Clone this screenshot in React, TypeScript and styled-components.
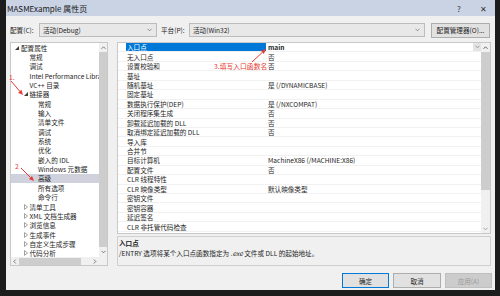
import React from "react";
import styled, { createGlobalStyle } from "styled-components";

const FONT = `"Noto Sans CJK SC", "Noto Sans", sans-serif`;

const Global = createGlobalStyle`
  html, body { margin: 0; padding: 0; background: #1c1c1c; }
  body { font-family: ${FONT}; width: 500px; height: 296px; overflow: hidden; color: #1e1e1e; }
  * { box-sizing: border-box; }
`;

const Screen = styled.div`
  width: 500px;
  height: 296px;
  background: #1c1c1c;
  padding-left: 6px;
`;

const Window = styled.div`
  position: relative;
  width: 489px;
  height: 290px;
  background: #f0f0f0;
  display: flex;
  flex-direction: column;
`;

const TitleBar = styled.div`
  height: 16px;
  background: #c9d3e4;
  display: flex;
  align-items: center;
  padding-left: 1px;
  font-size: 8px;
  color: #1a1a1a;
`;

const TitleButtons = styled.div`
  margin-left: auto;
  display: flex;
  height: 100%;
`;

const TitleButton = styled.div`
  width: 24px;
  height: 100%;
  display: flex;
  align-items: center;
  justify-content: center;
  font-size: 8px;
  color: #333;
`;

const ConfigRow = styled.div`
  margin-top: 7px;
  height: 14px;
  padding: 0 5px 0 4px;
  display: flex;
  align-items: center;
  font-size: 6.6px;
`;

const FieldLabel = styled.div<{ $w: number; $ml?: number }>`
  width: ${(p) => p.$w}px;
  margin-left: ${(p) => p.$ml ?? 0}px;
  white-space: nowrap;
`;

const Select = styled.div<{ $w: number }>`
  width: ${(p) => p.$w}px;
  height: 14px;
  background: #e8e8e8;
  border: 1px solid #bcbcbc;
  display: flex;
  align-items: center;
  padding: 0 4px 0 3px;
  justify-content: space-between;
`;

const PushButton = styled.div<{ $w: number; $ml?: number; $primary?: boolean; $disabled?: boolean }>`
  width: ${(p) => p.$w}px;
  margin-left: ${(p) => p.$ml ?? 0}px;
  height: 15px;
  background: ${(p) => (p.$disabled ? "#cccccc" : "#e1e1e1")};
  border: 1px solid ${(p) => (p.$primary ? "#0078d7" : p.$disabled ? "#bfbfbf" : "#adadad")};
  color: ${(p) => (p.$disabled ? "#9a9a9a" : "#1e1e1e")};
  display: flex;
  align-items: center;
  justify-content: center;
  font-size: 6.6px;
  white-space: nowrap;
`;

const Main = styled.div`
  margin-top: 5px;
  height: 224px;
  padding: 0 4px;
  display: flex;
  gap: 9px;
`;

const TreePanel = styled.div`
  width: 98px;
  height: 100%;
  background: #ffffff;
  border: 1px solid #c8c8c8;
  display: grid;
  grid-template-columns: 1fr 8px;
  grid-template-rows: 1fr 8px;
  overflow: hidden;
`;

const TreeRows = styled.div`
  overflow: hidden;
`;

const TreeRow = styled.div<{ $level: number; $selected?: boolean }>`
  height: 9.35px;
  display: flex;
  align-items: center;
  padding-left: ${(p) => 4 + p.$level * 8.5}px;
  background: ${(p) => (p.$selected ? "#cfd2dc" : "transparent")};
  font-size: 6.6px;
  white-space: nowrap;
  overflow: hidden;
`;

const Expander = styled.span`
  width: 6px;
  flex: none;
  display: flex;
  align-items: center;
`;

const VScroll = styled.div`
  background: #f0f0f0;
  display: flex;
  flex-direction: column;
  align-items: stretch;
`;

const ScrollArrow = styled.div<{ $h: number }>`
  height: ${(p) => p.$h}px;
  flex: none;
  display: flex;
  align-items: center;
  justify-content: center;
`;

const Thumb = styled.div<{ $fill?: boolean; $h?: number; $w?: number }>`
  background: #cdcdcd;
  ${(p) => (p.$fill ? "flex: 1;" : "flex: none;")}
  ${(p) => (p.$h !== undefined ? `height: ${p.$h}px;` : "")}
  ${(p) => (p.$w !== undefined ? `width: ${p.$w}px;` : "")}
`;

const Track = styled.div`
  flex: 1;
`;

const HScroll = styled.div`
  background: #f0f0f0;
  display: flex;
  align-items: center;
`;

const HArrow = styled.div`
  width: 8px;
  height: 100%;
  flex: none;
  display: flex;
  align-items: center;
  justify-content: center;
`;

const Corner = styled.div`
  background: #f0f0f0;
`;

const RightCol = styled.div`
  flex: 1;
  display: flex;
  flex-direction: column;
  gap: 2px;
`;

const Grid = styled.div`
  height: 192px;
  flex: none;
  background: #ffffff;
  border: 1px solid #c8c8c8;
  display: grid;
  grid-template-columns: 1fr 9px;
  overflow: hidden;
`;

const GridRows = styled.div`
  overflow: hidden;
`;

const PropRow = styled.div`
  height: 9.45px;
  display: grid;
  grid-template-columns: 8px 140px 1fr;
  border-bottom: 1px solid #f1f1f1;
  font-size: 6.6px;
  white-space: nowrap;
`;

const PropLabel = styled.div<{ $selected?: boolean }>`
  background: ${(p) => (p.$selected ? "#0078d7" : "transparent")};
  color: ${(p) => (p.$selected ? "#ffffff" : "#1e1e1e")};
  padding-left: 1px;
  display: flex;
  align-items: center;
  overflow: hidden;
`;

const PropValue = styled.div<{ $bold?: boolean }>`
  padding-left: 2px;
  display: flex;
  align-items: center;
  font-weight: ${(p) => (p.$bold ? 700 : 400)};
  overflow: hidden;
`;

const DropButton = styled.div`
  margin-left: auto;
  width: 8px;
  height: 8px;
  background: #e3e3e3;
  display: flex;
  align-items: center;
  justify-content: center;
`;

const Desc = styled.div`
  flex: 1;
  border: 1px solid #cfcfcf;
  background: #f0f0f0;
  padding: 2px 1px 0 1px;
  font-size: 6.6px;
  line-height: 9.5px;
  white-space: nowrap;
`;

const DescTitle = styled.div`
  font-weight: 700;
`;

const ButtonRow = styled.div`
  margin-top: 7px;
  padding-right: 3px;
  display: flex;
  justify-content: flex-end;
  gap: 4px;
`;

const AnnoText = styled.div<{ $x: number; $y: number }>`
  position: absolute;
  left: ${(p) => p.$x}px;
  top: ${(p) => p.$y}px;
  color: #e63a32;
  font-size: 6.8px;
  line-height: 8px;
  white-space: nowrap;
`;

const AnnoLayer = styled.svg`
  position: absolute;
  left: 0;
  top: 0;
  width: 489px;
  height: 290px;
  pointer-events: none;
`;

const Chevron = ({ dir, color = "#606060" }: { dir: "up" | "down" | "left" | "right"; color?: string }) => {
  const pts =
    dir === "down"
      ? "0.5,0.8 2.5,2.8 4.5,0.8"
      : dir === "up"
      ? "0.5,2.8 2.5,0.8 4.5,2.8"
      : dir === "left"
      ? "2.8,0.5 0.8,2.5 2.8,4.5"
      : "0.8,0.5 2.8,2.5 0.8,4.5";
  const w = dir === "up" || dir === "down" ? 5 : 4;
  const h = dir === "up" || dir === "down" ? 4 : 5;
  return (
    <svg width={w} height={h} viewBox={`0 0 ${w} ${h}`}>
      <polyline points={pts} fill="none" stroke={color} strokeWidth={0.8} />
    </svg>
  );
};

const ExpIcon = ({ kind }: { kind?: "open" | "closed" }) => {
  if (kind === "open")
    return (
      <svg width={4} height={4} viewBox="0 0 4 4">
        <path d="M4 0 L4 4 L0 4 Z" fill="#3c3c3c" />
      </svg>
    );
  if (kind === "closed")
    return (
      <svg width={4} height={6} viewBox="0 0 4 6">
        <path d="M0.5 0.6 L3.5 3 L0.5 5.4 Z" fill="none" stroke="#7a7a7a" strokeWidth={0.7} />
      </svg>
    );
  return null;
};

type TreeItem = { label: string; level: number; exp?: "open" | "closed"; selected?: boolean };

const tree: TreeItem[] = [
  { label: "配置属性", level: 0, exp: "open" },
  { label: "常规", level: 1 },
  { label: "调试", level: 1 },
  { label: "Intel Performance Libra", level: 1 },
  { label: "VC++ 目录", level: 1 },
  { label: "链接器", level: 1, exp: "open" },
  { label: "常规", level: 2 },
  { label: "输入", level: 2 },
  { label: "清单文件", level: 2 },
  { label: "调试", level: 2 },
  { label: "系统", level: 2 },
  { label: "优化", level: 2 },
  { label: "嵌入的 IDL", level: 2 },
  { label: "Windows 元数据", level: 2 },
  { label: "高级", level: 2, selected: true },
  { label: "所有选项", level: 2 },
  { label: "命令行", level: 2 },
  { label: "清单工具", level: 1, exp: "closed" },
  { label: "XML 文档生成器", level: 1, exp: "closed" },
  { label: "浏览信息", level: 1, exp: "closed" },
  { label: "生成事件", level: 1, exp: "closed" },
  { label: "自定义生成步骤", level: 1, exp: "closed" },
  { label: "代码分析", level: 1, exp: "closed" },
];

const props: [string, string][] = [
  ["入口点", "main"],
  ["无入口点", "否"],
  ["设置校验和", "否"],
  ["基址", ""],
  ["随机基址", "是 (/DYNAMICBASE)"],
  ["固定基址", ""],
  ["数据执行保护(DEP)", "是 (/NXCOMPAT)"],
  ["关闭程序集生成", "否"],
  ["卸载延迟加载的 DLL", "否"],
  ["取消绑定延迟加载的 DLL", "否"],
  ["导入库", ""],
  ["合并节", ""],
  ["目标计算机", "MachineX86 (/MACHINE:X86)"],
  ["配置文件", "否"],
  ["CLR 线程特性", ""],
  ["CLR 映像类型", "默认映像类型"],
  ["密钥文件", ""],
  ["密钥容器", ""],
  ["延迟签名", ""],
  ["CLR 非托管代码检查", ""],
];

const Arrow = ({ x1, y1, x2, y2 }: { x1: number; y1: number; x2: number; y2: number }) => {
  const dx = x2 - x1;
  const dy = y2 - y1;
  const len = Math.hypot(dx, dy);
  const ux = dx / len;
  const uy = dy / len;
  const hl = 5;
  const hw = 2.2;
  const bx = x2 - ux * hl;
  const by = y2 - uy * hl;
  const p1 = `${bx - uy * hw},${by + ux * hw}`;
  const p2 = `${bx + uy * hw},${by - ux * hw}`;
  return (
    <g>
      <line x1={x1} y1={y1} x2={bx} y2={by} stroke="#e63a32" strokeWidth={1} />
      <polygon points={`${x2},${y2} ${p1} ${p2}`} fill="#e63a32" />
    </g>
  );
};

export default function App() {
  return (
    <>
      <Global />
      <Screen>
        <Window>
          <TitleBar>
            MASMExample 属性页
            <TitleButtons>
              <TitleButton>?</TitleButton>
              <TitleButton>✕</TitleButton>
            </TitleButtons>
          </TitleBar>

          <ConfigRow>
            <FieldLabel $w={29}>配置(C):</FieldLabel>
            <Select $w={118}>
              <span>活动(Debug)</span>
              <Chevron dir="down" color="#777" />
            </Select>
            <FieldLabel $w={28} $ml={4}>平台(P):</FieldLabel>
            <Select $w={236}>
              <span>活动(Win32)</span>
              <Chevron dir="down" color="#777" />
            </Select>
            <PushButton $w={59} $ml={6}>配置管理器(O)...</PushButton>
          </ConfigRow>

          <Main>
            <TreePanel>
              <TreeRows>
                {tree.map((t, i) => (
                  <TreeRow key={i} $level={t.level} $selected={t.selected}>
                    <Expander>
                      <ExpIcon kind={t.exp} />
                    </Expander>
                    {t.label}
                  </TreeRow>
                ))}
              </TreeRows>
              <VScroll>
                <ScrollArrow $h={9}>
                  <Chevron dir="up" />
                </ScrollArrow>
                <Thumb $fill />
                <ScrollArrow $h={10}>
                  <Chevron dir="down" />
                </ScrollArrow>
              </VScroll>
              <HScroll>
                <HArrow>
                  <Chevron dir="left" />
                </HArrow>
                <Thumb $w={62} $h={7} />
                <Track />
                <HArrow>
                  <Chevron dir="right" />
                </HArrow>
              </HScroll>
              <Corner />
            </TreePanel>

            <RightCol>
              <Grid>
                <GridRows>
                  {props.map(([label, value], i) => (
                    <PropRow key={i}>
                      <span />
                      <PropLabel $selected={i === 0}>{label}</PropLabel>
                      <PropValue $bold={i === 0}>
                        {value}
                        {i === 0 && (
                          <DropButton>
                            <Chevron dir="down" color="#888" />
                          </DropButton>
                        )}
                      </PropValue>
                    </PropRow>
                  ))}
                </GridRows>
                <VScroll>
                  <ScrollArrow $h={9}>
                    <Chevron dir="up" color="#404040" />
                  </ScrollArrow>
                  <Thumb $h={138} />
                  <Track />
                  <ScrollArrow $h={8}>
                    <Chevron dir="down" color="#909090" />
                  </ScrollArrow>
                </VScroll>
              </Grid>
              <Desc>
                <DescTitle>入口点</DescTitle>
                <div>
                  /ENTRY 选项将某个入口点函数指定为 <i>.exe</i> 文件或 DLL 的起始地址。
                </div>
              </Desc>
            </RightCol>
          </Main>

          <ButtonRow>
            <PushButton $w={47} $primary>确定</PushButton>
            <PushButton $w={48}>取消</PushButton>
            <PushButton $w={47} $disabled>应用(A)</PushButton>
          </ButtonRow>

          <AnnoText $x={3} $y={73}>1.</AnnoText>
          <AnnoText $x={9} $y={162}>2</AnnoText>
          <AnnoText $x={208} $y={62}>3.填写入口函数名</AnnoText>
          <AnnoLayer viewBox="0 0 489 290">
            <Arrow x1={5} y1={81} x2={17} y2={95} />
            <Arrow x1={15} y1={168} x2={28} y2={181} />
            <Arrow x1={246} y1={62} x2={260} y2={49} />
          </AnnoLayer>
        </Window>
      </Screen>
    </>
  );
}
